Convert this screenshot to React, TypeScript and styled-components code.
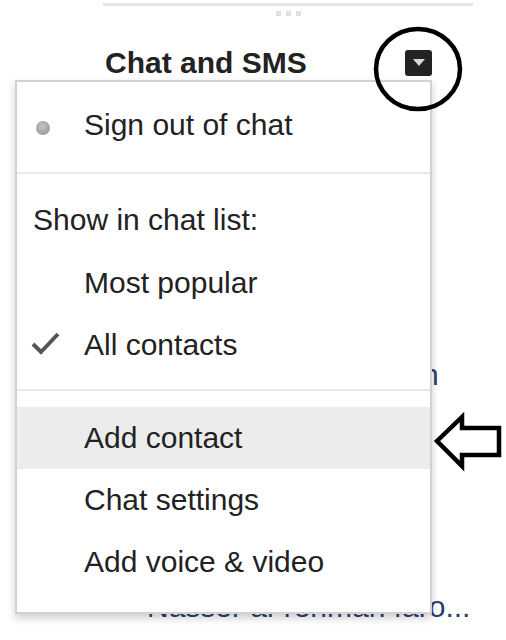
import React from 'react'
import styled, { createGlobalStyle } from 'styled-components'

const GlobalStyle = createGlobalStyle`
  html, body {
    margin: 0;
    padding: 0;
    background: #fff;
  }
  body {
    font-family: 'Liberation Sans', Arial, sans-serif;
    color: #222;
  }
`

const Page = styled.div`
  position: relative;
  width: 506px;
  height: 640px;
  overflow: hidden;
  background: #fff;
`

const Sidebar = styled.div`
  margin-left: 103px;
  width: 370px;
`

const TopRule = styled.div`
  margin-top: 3px;
  height: 3px;
  background: #e6e6e6;
`

const Grip = styled.div`
  display: flex;
  justify-content: center;
  gap: 5px;
  padding-top: 5px;

  & span {
    width: 5px;
    height: 5px;
    background: #e0e0e0;
  }
`

const Header = styled.div`
  display: flex;
  align-items: center;
  height: 32px;
  margin-top: 31px;
  padding-left: 2px;
  padding-right: 41px;
`

const Title = styled.div`
  flex: 1;
  font-size: 30px;
  font-weight: bold;
  color: #222;
  line-height: 32px;
`

const DropButton = styled.div`
  display: flex;
  align-items: center;
  justify-content: center;
  width: 27px;
  height: 26px;
  border-radius: 3px;
  background: #222;

  &::after {
    content: '';
    border-left: 6px solid transparent;
    border-right: 6px solid transparent;
    border-top: 7px solid #d8d8d8;
    margin-top: -2px;
  }
`

const ContactList = styled.ul`
  list-style: none;
  margin: 0;
  padding: 35px 0 0;
`

const Contact = styled.li`
  display: flex;
  align-items: center;
  height: 58px;
  padding-left: 8px;
  gap: 24px;
  font-size: 30px;
  color: #2b3f6b;
  white-space: nowrap;

  &::before {
    content: '';
    width: 12px;
    height: 12px;
    border-radius: 50%;
    background: #999;
    flex: none;
  }
`

const Menu = styled.div`
  position: absolute;
  left: 15px;
  top: 80px;
  width: 413px;
  padding: 12px 0 19px;
  background: #fff;
  border: 2px solid #d2d2d2;
  box-shadow: 0 4px 8px rgba(0, 0, 0, 0.2);
`

const Item = styled.div<{ $active?: boolean }>`
  position: relative;
  display: flex;
  align-items: center;
  height: 62px;
  padding-left: 67px;
  font-size: 30px;
  color: #222;
  background: ${({ $active }) => ($active ? '#ececec' : 'transparent')};
`

const SectionLabel = styled.div`
  display: flex;
  align-items: center;
  height: 65px;
  margin-top: 13px;
  padding-left: 16px;
  font-size: 30px;
  color: #222;
`

const Separator = styled.div<{ $top: number; $after: number }>`
  height: 2px;
  margin-top: ${({ $top }) => $top}px;
  margin-bottom: ${({ $after }) => $after}px;
  background: #e8e8e8;
`

const StatusDot = styled.span`
  position: absolute;
  left: 19px;
  top: 27px;
  width: 14px;
  height: 14px;
  border-radius: 50%;
  background: radial-gradient(circle at 45% 40%, #c4c4c4, #8e8e8e);
  filter: blur(0.6px);
`

const Check = styled.svg`
  position: absolute;
  left: 13px;
  top: 17px;
`

const Annotation = styled.svg`
  position: absolute;
  left: 0;
  top: 0;
  pointer-events: none;
`

const contacts = [
  'Ali Raza',
  'Sara Khan',
  'Bilal Ahmed',
  'Hina Tariq',
  'Muhammad Sulaiman',
  'Asad Ali',
  'Zain Malik',
  'Omar Farooq',
  'Nasser al-rehman faro...',
]

export default function App() {
  return (
    <Page>
      <GlobalStyle />
      <Sidebar>
        <TopRule />
        <Grip>
          <span />
          <span />
          <span />
        </Grip>
        <Header>
          <Title>Chat and SMS</Title>
          <DropButton />
        </Header>
        <ContactList>
          {contacts.map((name) => (
            <Contact key={name}>{name}</Contact>
          ))}
        </ContactList>
      </Sidebar>

      <Menu>
        <Item>
          <StatusDot />
          Sign out of chat
        </Item>
        <Separator $top={16} $after={0} />
        <SectionLabel>Show in chat list:</SectionLabel>
        <Item>Most popular</Item>
        <Item>
          <Check width="32" height="28" viewBox="0 0 32 28">
            <path
              d="M3 13 L11 21 L28 3"
              fill="none"
              stroke="#555"
              strokeWidth="4"
              strokeLinejoin="miter"
            />
          </Check>
          All contacts
        </Item>
        <Separator $top={13} $after={16} />
        <Item $active>Add contact</Item>
        <Item>Chat settings</Item>
        <Item>Add voice &amp; video</Item>
      </Menu>

      <Annotation width="506" height="640" viewBox="0 0 506 640">
        <ellipse
          cx="418"
          cy="69"
          rx="42"
          ry="40"
          fill="none"
          stroke="#000"
          strokeWidth="4.5"
        />
        <path
          d="M437 441 L462 417 L462 428 L499 428 L499 455 L462 455 L462 466 Z"
          fill="none"
          stroke="#000"
          strokeWidth="4.5"
        />
      </Annotation>
    </Page>
  )
}
